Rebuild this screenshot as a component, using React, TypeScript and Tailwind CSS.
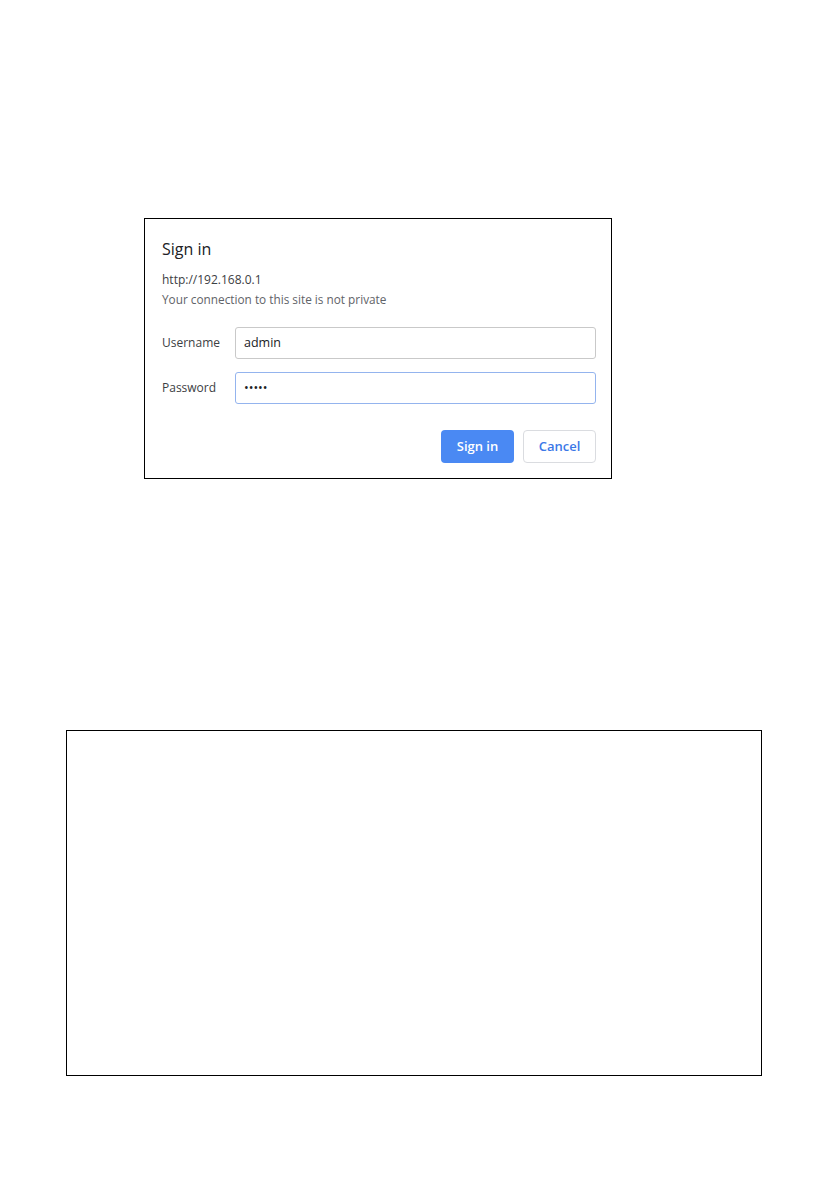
const font = { fontFamily: '"Open Sans", "Noto Sans", Arial, sans-serif' };

function Field({ label, value, focused }: { label: string; value: string; focused?: boolean }) {
  return (
    <div className="flex items-center">
      <label className="w-[73px] text-[12px] leading-4 text-[#3c4043]">{label}</label>
      <div
        className={`flex h-8 flex-1 items-center rounded-[3px] border px-[8px] text-[12.5px] text-[#202124] ${
          focused ? "border-[#94b4ee]" : "border-[#c9c9c9]"
        }`}
      >
        {value}
      </div>
    </div>
  );
}

export default function App() {
  return (
    <main className="min-h-[1190px] w-[840px] bg-white pt-[218px]" style={font}>
      <section className="ml-[144px] h-[261px] w-[468px] border border-black bg-white px-[17px] pt-[20px] pr-[15px]">
        <h1 className="text-[16px] leading-5 text-[#202124]">Sign in</h1>
        <p className="mt-[13px] text-[12px] leading-4 text-[#3c4043]">http://192.168.0.1</p>
        <p className="mt-[3px] text-[11.8px] leading-4 text-[#5f6368]">
          Your connection to this site is not private
        </p>

        <div className="mt-[20px] flex flex-col gap-[13px]">
          <Field label="Username" value="admin" />
          <Field label="Password" value="•••••" focused />
        </div>

        <div className="mt-[26px] flex justify-end gap-[9px]">
          <button
            type="button"
            className="h-[33px] w-[73px] rounded-[4px] bg-[#4a89f3] text-[13px] font-semibold text-white"
          >
            Sign in
          </button>
          <button
            type="button"
            className="h-[33px] w-[73px] rounded-[4px] border border-[#dadce0] bg-white text-[13px] font-semibold text-[#3b78e7]"
          >
            Cancel
          </button>
        </div>
      </section>

      <section className="mt-[251px] ml-[66px] h-[346px] w-[696px] border border-black bg-white" />
    </main>
  );
}
